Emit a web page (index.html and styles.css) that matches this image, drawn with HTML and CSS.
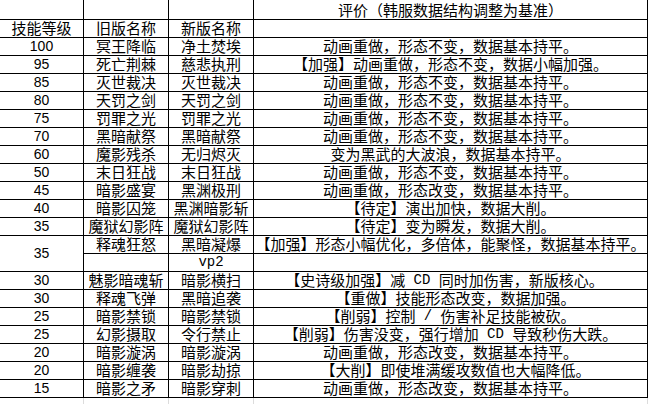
FILE: index.html
```html
<!DOCTYPE html>
<html lang="zh-CN">
<head>
<meta charset="utf-8">
<title>技能对比</title>
<link rel="stylesheet" href="styles.css">
</head>
<body>
<div class="sheet">
  <div class="c"></div><div class="c"></div><div class="c"></div><div class="c d">评价（韩服数据结构调整为基准）</div>
  <div class="c">技能等级</div><div class="c">旧版名称</div><div class="c">新版名称</div><div class="c d"></div>

  <div class="c n">100</div><div class="c">冥王降临</div><div class="c">净土焚埃</div><div class="c d">动画重做，形态不变，数据基本持平。</div>
  <div class="c n">95</div><div class="c">死亡荆棘</div><div class="c">慈悲执刑</div><div class="c d">【加强】动画重做，形态不变，数据小幅加强。</div>
  <div class="c n">85</div><div class="c">灭世裁决</div><div class="c">灭世裁决</div><div class="c d">动画重做，形态不变，数据基本持平。</div>
  <div class="c n">80</div><div class="c">天罚之剑</div><div class="c">天罚之剑</div><div class="c d">动画重做，形态不变，数据基本持平。</div>
  <div class="c n">75</div><div class="c">罚罪之光</div><div class="c">罚罪之光</div><div class="c d">动画重做，形态不变，数据基本持平。</div>
  <div class="c n">70</div><div class="c">黑暗献祭</div><div class="c">黑暗献祭</div><div class="c d">动画重做，形态不变，数据基本持平。</div>
  <div class="c n">60</div><div class="c">魔影残杀</div><div class="c">无归烬灭</div><div class="c d">变为黑武的大波浪，数据基本持平。</div>
  <div class="c n">50</div><div class="c">末日狂战</div><div class="c">末日狂战</div><div class="c d">动画重做，形态不变，数据基本持平。</div>
  <div class="c n">45</div><div class="c">暗影盛宴</div><div class="c">黑渊极刑</div><div class="c d">动画重做，形态改变，数据基本持平。</div>
  <div class="c n">40</div><div class="c">暗影囚笼</div><div class="c">黑渊暗影斩</div><div class="c d">【待定】演出加快，数据大削。</div>
  <div class="c n">35</div><div class="c">魔狱幻影阵</div><div class="c">魔狱幻影阵</div><div class="c d">【待定】变为瞬发，数据大削。</div>
  <div class="c n m">35</div><div class="c">释魂狂怒</div><div class="c">黑暗凝爆</div><div class="c d">【加强】形态小幅优化，多倍体，能聚怪，数据基本持平。</div>
  <div class="c"></div><div class="c"><span class="lat">vp2</span></div><div class="c d"></div>
  <div class="c n">30</div><div class="c">魅影暗魂斩</div><div class="c">暗影横扫</div><div class="c d sl">【史诗级加强】减<span class="lat"> CD </span>同时加伤害，新版核心。</div>
  <div class="c n">30</div><div class="c">释魂飞弹</div><div class="c">黑暗追袭</div><div class="c d sr">【重做】技能形态改变，数据加强。</div>
  <div class="c n">25</div><div class="c">暗影禁锁</div><div class="c">暗影禁锁</div><div class="c d">【削弱】控制<span class="lat"> / </span>伤害补足技能被砍。</div>
  <div class="c n">25</div><div class="c">幻影摄取</div><div class="c">令行禁止</div><div class="c d">【削弱】伤害没变，强行增加<span class="lat"> CD </span>导致秒伤大跌。</div>
  <div class="c n">20</div><div class="c">暗影漩涡</div><div class="c">暗影漩涡</div><div class="c d">动画重做，形态改变，数据基本持平。</div>
  <div class="c n">20</div><div class="c">暗影缠袭</div><div class="c">暗影劫掠</div><div class="c d sr">【大削】即使堆满缓攻数值也大幅降低。</div>
  <div class="c n">15</div><div class="c">暗影之矛</div><div class="c">暗影穿刺</div><div class="c d">动画重做，形态改变，数据基本持平。</div>
</div>
<div class="tail"><div></div><div></div><div></div><div></div></div>
</body>
</html>
```

FILE: styles.css
```css
html, body {
  margin: 0;
  padding: 0;
  background: #fff;
}

body {
  width: 650px;
  height: 404px;
  overflow: hidden;
  font-family: "Liberation Sans", "Noto Sans CJK SC", sans-serif;
  color: #000;
}

.sheet {
  display: grid;
  grid-template-columns: 84px 85px 85px 394px;
  grid-template-rows: 20px repeat(21, 18px);
}

.c {
  box-sizing: border-box;
  border-right: 1px solid #000;
  border-bottom: 1px solid #000;
  display: flex;
  align-items: flex-end;
  justify-content: center;
  padding-bottom: 1px;
  font-size: 15px;
  line-height: 15px;
  white-space: nowrap;
}

.n {
  font-size: 14px;
  padding-bottom: 1px;
}

.m {
  grid-row: span 2;
  align-items: center;
  padding-bottom: 0;
}

.d {
  overflow: visible;
}

.sr {
  padding-left: 10px;
}

.sl {
  padding-right: 12px;
}

.lat {
  font-family: "Liberation Mono", monospace;
  font-size: 14px;
  white-space: pre;
}

.tail {
  display: grid;
  grid-template-columns: 84px 85px 85px 394px;
  height: 6px;
}

.tail div {
  border-right: 1px solid #dcdcdc;
}
```
